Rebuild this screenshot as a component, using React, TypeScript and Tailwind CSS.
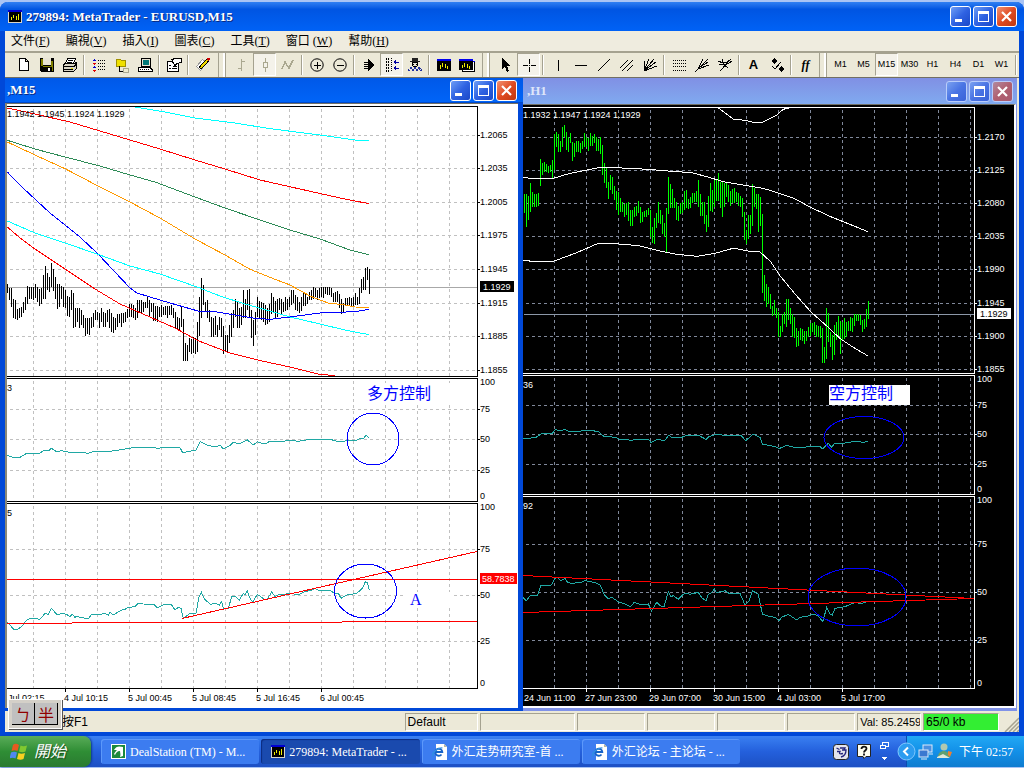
import React from "react";
import clsx from "clsx";

type Line = { color: string; points: string };
type Label = { text: string; y: number };

type ChartProps = {
  viewBox: string;
  title: string;
  ink: string;
  paper: string;
  gridColor: string;
  priceColor: string;
  barColor: string;
  left: number;
  right: number;
  panels: [number, number][];
  columns: number[];
  rows: number[];
  priceY: number;
  price: string;
  // bars, lines and oscillators are recorded in thirds of a pixel from this origin
  originX: number;
  originY: number;
  barX: number;
  bars: number[];
  lines: Line[];
  oscillatorY: number;
  oscillators: string[];
  quotes: string;
  quotesY: number;
  labels: Label[];
  corner: Label[];
  ticks: number[];
  times: [number, string][];
  children?: React.ReactNode;
};

const LEFT_BARS = [
  552, 580, 565, 600, 565, 620, 597, 655, 600, 657, 628, 660, 625, 655, 620, 650,
  605, 640, 592, 630, 558, 612, 562, 597, 562, 597, 562, 600, 552, 595, 560, 607,
  568, 617, 565, 612, 525, 597, 498, 597, 520, 570, 530, 575, 490, 560, 508, 572,
  530, 597, 552, 627, 552, 622, 557, 597, 560, 622, 570, 625, 588, 648, 590, 650,
  570, 630, 578, 685, 623, 680, 625, 665, 625, 685, 630, 675, 645, 685, 653, 708,
  655, 703, 655, 705, 650, 685, 640, 682, 630, 660, 637, 660, 640, 685, 625, 665,
  637, 680, 640, 680, 630, 665, 628, 683, 640, 695, 650, 698, 653, 690, 642, 682,
  642, 670, 640, 680, 640, 668, 635, 665, 627, 655, 613, 650, 612, 650, 615, 655,
  625, 660, 600, 655, 600, 640, 600, 640, 605, 635, 605, 625, 592, 625, 600, 650,
  610, 637, 610, 662, 617, 662, 618, 665, 620, 650, 615, 650, 620, 645, 618, 645,
  617, 655, 617, 645, 615, 645, 625, 655, 637, 685, 650, 690, 655, 690, 622, 680,
  658, 782, 730, 782, 735, 782, 715, 755, 717, 762, 710, 760, 715, 762, 665, 757,
  590, 707, 535, 655, 555, 615, 605, 635, 600, 655, 630, 665, 650, 710, 655, 710,
  648, 705, 675, 710, 650, 690, 655, 712, 677, 763, 705, 757, 705, 757, 675, 730,
  640, 710, 630, 685, 597, 650, 605, 685, 625, 685, 620, 675, 570, 655, 598, 655,
  570, 630, 568, 650, 630, 715, 660, 737, 635, 705, 592, 650, 603, 655, 605, 660,
  610, 665, 615, 675, 625, 672, 612, 665, 580, 642, 590, 640, 602, 655, 597, 650,
  595, 630, 598, 645, 605, 635, 590, 632, 598, 630, 592, 620, 570, 615, 570, 610,
  585, 630, 590, 632, 605, 640, 592, 632, 580, 617, 583, 617, 590, 612, 575, 600,
  570, 600, 562, 597, 563, 590, 570, 600, 565, 595, 562, 590, 560, 595, 562, 583,
  562, 585, 562, 585, 563, 592, 578, 605, 575, 605, 572, 605, 582, 625, 598, 642,
  610, 640, 595, 617, 595, 617, 592, 617, 595, 620, 592, 617, 580, 615, 592, 615,
  563, 613, 537, 580, 530, 570, 503, 570, 502, 540, 507, 582,
];

const RIGHT_BARS = [
  282, 338, 282, 380, 288, 360, 250, 335, 277, 322, 282, 322, 282, 322, 278, 317,
  177, 257, 190, 225, 187, 215, 193, 215, 198, 218, 196, 215, 180, 235, 102, 210,
  97, 140, 102, 157, 122, 155, 80, 142, 75, 112, 97, 150, 110, 157, 98, 130,
  125, 182, 130, 170, 123, 155, 123, 155, 130, 158, 122, 147, 98, 140, 110, 142,
  115, 152, 100, 138, 108, 138, 102, 130, 110, 152, 117, 152, 112, 162, 135, 225,
  188, 250, 205, 265, 245, 297, 225, 270, 232, 282, 258, 300, 272, 330, 275, 345,
  295, 337, 305, 337, 312, 350, 310, 345, 305, 362, 330, 377, 330, 377, 322, 350,
  318, 347, 302, 340, 320, 368, 335, 365, 333, 350, 330, 350, 325, 345, 330, 410,
  380, 430, 353, 432, 340, 385, 307, 370, 330, 372, 345, 402, 368, 412, 325, 455,
  232, 343, 252, 325, 268, 325, 293, 325, 305, 360, 317, 362, 308, 343, 305, 340,
  272, 330, 270, 325, 297, 327, 290, 325, 280, 310, 278, 307, 272, 307, 240, 320,
  282, 347, 305, 347, 307, 372, 345, 395, 288, 380, 248, 332, 270, 335, 238, 320,
  240, 302, 220, 302, 245, 325, 243, 350, 248, 320, 247, 290, 255, 305, 272, 317,
  267, 310, 265, 310, 277, 307, 280, 317, 288, 322, 293, 350, 335, 420, 390, 432,
  345, 418, 345, 402, 252, 377, 265, 320, 282, 327, 282, 397, 290, 377, 342, 580,
  525, 602, 553, 622, 560, 612, 583, 627, 617, 648, 600, 645, 623, 655, 637, 710,
  678, 712, 643, 695, 635, 672, 598, 680, 597, 660, 625, 672, 643, 710, 650, 715,
  683, 740, 692, 738, 683, 720, 687, 722, 693, 733, 692, 722, 680, 712, 670, 707,
  668, 697, 667, 705, 675, 710, 677, 710, 678, 715, 685, 788, 740, 788, 623, 778,
  640, 725, 695, 742, 705, 780, 675, 765, 665, 720, 648, 710, 663, 762, 665, 722,
  655, 717, 665, 712, 662, 692, 652, 692, 655, 695, 643, 677, 643, 663, 643, 662,
  645, 675, 660, 695, 657, 687, 627, 680, 603, 657,
];

const LEFT_LINES: Line[] = [
  { color: "#00ffff", points: "405,21 495,36 585,54 705,69 810,86 960,105 1065,120 1107,122" },
  { color: "#ff0000", points: "22,24 105,42 210,66 300,93 390,120 480,147 585,180 675,207 780,240 900,267 1020,294 1107,311" },
  { color: "#2e8b57", points: "22,121 105,147 195,171 300,198 390,225 465,246 585,291 675,324 780,360 870,390 960,417 1050,450 1107,464" },
  { color: "#ff9900", points: "22,126 105,165 195,206 300,261 390,306 480,354 585,417 675,465 750,508 810,532 870,555 930,588 984,609 1035,615 1065,621 1107,622" },
  { color: "#0000ff", points: "22,216 66,261 150,339 240,411 294,462 390,564 411,579 450,591 510,609 594,633 645,635 705,645 765,655 810,658 870,651 960,639 1065,635 1107,628" },
  { color: "#00ffff", points: "22,363 105,399 195,429 294,463 390,498 480,522 594,562 660,588 735,612 810,633 870,651 960,672 1035,690 1107,704" },
  { color: "#ff0000", points: "22,381 60,414 105,447 195,507 285,567 360,612 450,651 525,684 594,722 690,759 786,783 870,801 954,822 1005,827" },
];

const RIGHT_LINES: Line[] = [
  { color: "#ffffff", points: "610,24 655,57 690,61 715,67 742,67 787,45 797,33 812,25 822,24" },
  { color: "#ffffff", points: "24,232 45,235 115,235 165,220 250,203 300,203 400,208 470,214 530,218 575,230 625,245 690,256 745,265 792,280 837,295 887,322 947,350 997,370 1059,395" },
  { color: "#ffffff", points: "24,480 50,484 115,484 180,460 250,430 290,430 370,437 430,452 480,462 545,469 600,460 650,446 665,446 700,453 735,456 767,485 797,530 847,590 887,635 932,675 977,717 1012,740 1059,768" },
];

const LEFT_OSC = [
  "22,226 40,232 60,232 80,220 118,220 135,210 145,213 154,205 170,215 185,212 210,217 240,217 265,220 280,214 330,214 345,212 380,206 405,202 465,202 475,207 485,202 540,203 548,218 570,214 588,210 600,185 620,195 640,200 662,197 670,207 690,197 700,187 718,192 742,180 760,195 772,185 785,190 800,190 810,183 830,184 880,182 895,184 930,178 990,178 1020,186 1045,181 1065,182 1080,176 1092,174 1098,166 1107,174",
  "22,728 30,735 40,747 52,748 65,740 82,718 100,715 120,718 135,700 145,703 154,685 172,705 185,700 200,703 210,710 217,703 225,712 232,708 240,712 265,716 275,703 300,703 315,700 325,705 330,697 340,705 365,690 375,688 385,682 405,680 415,670 430,672 462,674 472,683 490,674 515,675 525,690 535,682 543,685 550,715 570,700 588,700 597,650 604,637 612,655 622,665 632,673 645,670 658,675 665,665 670,685 685,685 695,650 705,648 718,660 730,640 735,645 742,633 750,655 758,667 772,643 785,652 790,657 802,657 815,636 825,650 835,645 875,640 895,645 915,635 935,630 945,625 955,630 990,632 1005,640 1015,640 1023,655 1040,645 1070,640 1085,627 1090,620 1096,605 1102,608 1108,630",
];

const RIGHT_OSC = [
  "24,204 35,206 65,201 80,190 112,190 122,178 130,182 150,179 160,184 190,184 215,181 250,184 265,198 300,202 315,208 340,209 348,213 360,208 400,208 408,217 425,209 450,211 462,195 470,203 500,202 510,198 550,196 573,208 582,200 600,194 680,198 692,212 715,192 735,202 742,222 760,226 780,230 792,236 815,226 845,234 890,229 915,230 922,237 940,220 950,232 958,221 990,219 1020,214 1045,217 1058,214",
  "24,683 34,692 45,678 68,675 77,647 110,645 120,625 128,622 137,632 150,625 155,635 172,642 185,637 200,637 210,632 240,638 255,645 262,660 268,675 280,687 290,682 310,695 330,702 346,710 358,697 375,703 400,702 410,723 425,697 435,707 447,710 460,665 468,680 475,677 490,688 502,675 512,670 525,673 550,667 560,683 573,692 580,673 590,668 598,657 605,668 630,662 645,672 675,670 690,705 703,692 712,662 730,673 742,732 765,740 780,742 792,752 800,742 820,733 845,750 855,742 885,737 895,732 910,738 923,755 935,713 945,732 952,735 960,715 990,710 1018,698 1040,700 1052,697",
];

const chartText = "font-['Liberation_Sans',sans-serif] text-[9px]";

const Chart = (p: ChartProps) => {
  const bars: string[] = [];
  for (let i = 0; i < p.bars.length; i += 2) {
    bars.push(`M${p.barX + i * 3} ${p.bars[i]}V${p.bars[i + 1]}`);
  }
  const bottom = p.panels[p.panels.length - 1][1];
  return (
    <svg viewBox={p.viewBox} className="block h-auto w-full" role="img" aria-label={p.title}>
      <g shapeRendering="crispEdges" fill="none" transform="translate(.5 .5)">
        <g stroke={p.gridColor} strokeDasharray="3 3">
          {p.panels.map(([top, end]) =>
            p.columns.map((x) => <path key={`${top}-${x}`} d={`M${x} ${top + 2}V${end}`} />),
          )}
          {p.rows.map((y) => (
            <path key={y} d={`M${p.left + 2} ${y}H${p.right}`} />
          ))}
        </g>
        <path d={`M${p.left} ${p.priceY}H${p.right}`} stroke={p.priceColor} />
        <g stroke={p.ink}>
          {p.panels.map(([top, end]) => (
            <path key={top} d={`M${p.left - 1} ${top}H${p.right}V${end}H${p.left - 1}`} />
          ))}
          {p.rows.map((y) => (
            <path key={y} d={`M${p.right} ${y}h2`} />
          ))}
          {p.ticks.map((x) => (
            <path key={x} d={`M${x} ${bottom}v3`} />
          ))}
        </g>
      </g>
      <g
        shapeRendering="crispEdges"
        fill="none"
        strokeWidth="3"
        transform={`translate(${p.originX} ${p.originY}) scale(${1 / 3})`}
      >
        <path d={bars.join("")} stroke={p.barColor} />
        {p.lines.map((line) => (
          <polyline key={line.points} points={line.points} stroke={line.color} />
        ))}
      </g>
      <g
        shapeRendering="crispEdges"
        fill="none"
        stroke="#20a8a4"
        strokeWidth="3"
        transform={`translate(${p.originX} ${p.oscillatorY}) scale(${1 / 3})`}
      >
        {p.oscillators.map((points) => (
          <polyline key={points} points={points} />
        ))}
      </g>
      {p.children}
      <g className={chartText} fill={p.ink}>
        <text x={p.left} y={p.quotesY}>{p.quotes}</text>
        {p.labels.map((l) => (
          <text key={l.y} x={p.right + 3} y={l.y}>{l.text}</text>
        ))}
        {p.corner.map((l) => (
          <text key={l.y} x={p.left} y={l.y}>{l.text}</text>
        ))}
        {p.times.map(([x, text]) => (
          <text key={x} x={x} y={bottom + 13}>{text}</text>
        ))}
      </g>
      <rect x={p.right + 3} y={p.priceY - 6} width="34" height="11" fill={p.ink} />
      <text x={p.right + 6} y={p.priceY + 3} className={chartText} fill={p.paper}>{p.price}</text>
    </svg>
  );
};

const range = (start: number, count: number) => Array.from({ length: count }, (_, i) => start + i * 32);

const noteText = "font-['Liberation_Serif','Noto_Sans_CJK_TC',serif] text-[16px]";

const LeftChart = () => (
  <Chart
    title="EURUSD,M15"
    viewBox="7 104 511 604"
    ink="#000000"
    paper="#ffffff"
    gridColor="#c0c0c0"
    priceColor="#a8a8a8"
    barColor="#000000"
    left={7}
    right={477}
    panels={[[106, 376], [378, 501], [503, 688]]}
    columns={range(33, 14)}
    rows={[135, 168, 202, 235, 269, 303, 336, 370, 409, 439, 470, 549, 595, 641]}
    priceY={287}
    price="1.1929"
    originX={0}
    originY={100}
    barX={23}
    bars={LEFT_BARS}
    lines={LEFT_LINES}
    oscillatorY={380}
    oscillators={LEFT_OSC}
    quotes="1.1942 1.1945 1.1924 1.1929"
    quotesY={117}
    labels={[
      { text: "1.2065", y: 138 },
      { text: "1.2035", y: 171 },
      { text: "1.2005", y: 205 },
      { text: "1.1975", y: 238 },
      { text: "1.1945", y: 272 },
      { text: "1.1915", y: 306 },
      { text: "1.1885", y: 339 },
      { text: "1.1855", y: 373 },
      { text: "100", y: 385 },
      { text: "75", y: 412 },
      { text: "50", y: 442 },
      { text: "25", y: 473 },
      { text: "0", y: 499 },
      { text: "100", y: 510 },
      { text: "75", y: 552 },
      { text: "50", y: 598 },
      { text: "25", y: 644 },
      { text: "0", y: 686 },
    ]}
    corner={[{ text: "3", y: 391 }, { text: "5", y: 516 }]}
    ticks={[65, 129, 193, 257, 321]}
    times={[
      [8, "Jul 02:15"],
      [64, "4 Jul 10:15"],
      [128, "5 Jul 00:45"],
      [192, "5 Jul 08:45"],
      [256, "5 Jul 16:45"],
      [320, "6 Jul 00:45"],
    ]}
  >
    <g shapeRendering="crispEdges" fill="none" stroke="#ff0000">
      <path d="M7 579.5H477M182 618.5L477 551.5M7 623.5H72M72 622.5H342M342 621.5H477" />
    </g>
    <rect x="368" y="383" width="83" height="21" fill="#ffffff" />
    <rect x="404" y="592" width="48" height="16" fill="#ffffff" />
    <text x="367" y="399" className={noteText} fill="#0000ff">多方控制</text>
    <text x="410" y="605" className={noteText} fill="#0000ff">A</text>
    <g shapeRendering="crispEdges" fill="none" stroke="#0000ff">
      <circle cx="373" cy="439" r="26" />
      <ellipse cx="365.5" cy="591" rx="31" ry="27" />
    </g>
    <rect x="480" y="573" width="37" height="11" fill="#ff0000" />
    <text x="482" y="582" className={chartText} fill="#ffffff">58.7838</text>
  </Chart>
);

const RightChart = () => (
  <Chart
    title="EURUSD,H1"
    viewBox="523 105 491 601"
    ink="#ffffff"
    paper="#000000"
    gridColor="#80889a"
    priceColor="#8c98a8"
    barColor="#00ff00"
    left={523}
    right={974}
    panels={[[107, 373], [375, 494], [496, 688]]}
    columns={range(554, 14)}
    rows={[137, 170, 203, 236, 269, 303, 336, 369, 405, 434, 464, 544, 592, 640]}
    priceY={314}
    price="1.1929"
    originX={515}
    originY={100}
    barX={29}
    bars={RIGHT_BARS}
    lines={RIGHT_LINES}
    oscillatorY={370}
    oscillators={RIGHT_OSC}
    quotes="1.1932 1.1947 1.1924 1.1929"
    quotesY={118}
    labels={[
      { text: "1.2170", y: 140 },
      { text: "1.2125", y: 173 },
      { text: "1.2080", y: 206 },
      { text: "1.2035", y: 239 },
      { text: "1.1990", y: 272 },
      { text: "1.1945", y: 306 },
      { text: "1.1900", y: 339 },
      { text: "1.1855", y: 372 },
      { text: "100", y: 382 },
      { text: "75", y: 408 },
      { text: "50", y: 437 },
      { text: "25", y: 467 },
      { text: "0", y: 492 },
      { text: "100", y: 503 },
      { text: "75", y: 547 },
      { text: "50", y: 595 },
      { text: "25", y: 643 },
      { text: "0", y: 686 },
    ]}
    corner={[{ text: "36", y: 388 }, { text: "92", y: 509 }]}
    ticks={[586, 650, 714, 778, 842]}
    times={[
      [524, "24 Jun 11:00"],
      [585, "27 Jun 23:00"],
      [649, "29 Jun 07:00"],
      [713, "30 Jun 15:00"],
      [777, "4 Jul 03:00"],
      [841, "5 Jul 17:00"],
    ]}
  >
    <rect x="829" y="385" width="81" height="20" fill="#ffffff" />
    <text x="829" y="399" className={noteText} fill="#0000ff">空方控制</text>
    <path
      d="M523 575.500L974 598.500M523 612.500L974 598.500"
      shapeRendering="crispEdges"
      fill="none"
      stroke="#ff0000"
    />
    <g shapeRendering="crispEdges" fill="none" stroke="#0000ff">
      <ellipse cx="864" cy="437.5" rx="40" ry="21" />
      <ellipse cx="857" cy="597" rx="49" ry="29" />
    </g>
  </Chart>
);

const captionStyles = {
  blue: "bg-linear-to-br from-[#6f9df5] via-[#2f62e2] to-[#1a48c8]",
  red: "bg-linear-to-br from-[#f09070] via-[#e04a20] to-[#c03810]",
  fadedBlue: "bg-linear-to-br from-[#7aa0f0] via-[#4a74e4] to-[#3a62d8]",
  fadedRed: "bg-linear-to-br from-[#b08aa0] via-[#b06070] to-[#a85a70]",
};

const CaptionButtons = ({ name, faded = false }: { name: string; faded?: boolean }) => {
  const base = clsx(
    "flex size-[21px] items-center justify-center rounded-[3px] border",
    faded ? "border-[#b9cdfa]" : "border-white",
  );
  const blue = faded ? captionStyles.fadedBlue : captionStyles.blue;
  const red = faded ? captionStyles.fadedRed : captionStyles.red;
  return (
    <div className="flex shrink-0 gap-0.5">
      <button type="button" aria-label={`Minimize ${name}`} className={clsx(base, blue)}>
        <svg width="19" height="19" viewBox="0 0 19 19" shapeRendering="crispEdges">
          <path d="M4 12h7v3H4z" fill="#fff" />
        </svg>
      </button>
      <button type="button" aria-label={`Maximize ${name}`} className={clsx(base, blue)}>
        <svg width="19" height="19" viewBox="0 0 19 19" shapeRendering="crispEdges">
          <path d="M4 4h11v11H4zM5 7v7h9V7z" fill="#fff" fillRule="evenodd" />
        </svg>
      </button>
      <button type="button" aria-label={`Close ${name}`} className={clsx(base, red)}>
        <svg width="19" height="19" viewBox="0 0 19 19">
          <path d="M5 5l9 9M14 5l-9 9" stroke="#fff" strokeWidth="2.2" />
        </svg>
      </button>
    </div>
  );
};

const icons: Record<string, React.ReactNode> = {
  "New chart": <path d="M3.500 1.500h6l3 3v9h-9zM9.500 1.500v3h3" fill="#fff" stroke="#000" />,
  Save: (
    <>
      <path d="M1 1h14v14H2l-1-1z" fill="#000" />
      <path d="M2 2h2v7H2zM12 4h2v10h-1v-4H4V9h8z" fill="#808000" />
      <path d="M4 1h8v7H4z" fill="#e8e4d4" />
      <path d="M9 11h2v3H9z" fill="#fff" />
    </>
  ),
  Print: (
    <>
      <path d="M5.500 1.500h8l-2 5h-8z" fill="#fff" stroke="#000" />
      <path d="M6 3.500h5M5 5.500h5" stroke="#000" />
      <path d="M1.500 7.500l2-1h9l2-1v6l-3 3h-10z" fill="#d8d4c4" stroke="#000" />
      <path d="M1 9.500h11l3-3M2 12.500h9" stroke="#000" fill="none" />
      <path d="M9 11h2v1H9z" fill="#dd0" />
    </>
  ),
  "Market watch": (
    <>
      <path d="M1 4l2-2 2 2zM1 11l2-2 2 2z" fill="#0000d0" />
      <path d="M1 6h4L3 8zM1 13h4l-2 2z" fill="#e00000" />
      <path d="M7 3.500h8M7 6.500h8M7 9.500h8M7 12.500h8" stroke="#000" strokeDasharray="1 1" />
    </>
  ),
  Navigator: (
    <>
      <path d="M2 2h4l1 1h4v6H2z" fill="#f0e000" stroke="#a09000" />
      <path d="M5.500 9v5.500H9" stroke="#000" fill="none" />
      <path d="M9 11h5v4H9z" fill="#f0ecd0" stroke="#aaa890" />
    </>
  ),
  Terminal: (
    <>
      <path d="M4.500 1.500h9v8h-9z" fill="#e8e4d4" stroke="#000" />
      <path d="M6 3h6v5H6z" fill="#007878" />
      <path d="M2 10.500h11l2 2v2H1v-2z" fill="#fff" stroke="#000" />
      <path d="M3 12.500h9" stroke="#000" strokeDasharray="1 1" />
    </>
  ),
  Properties: (
    <>
      <path d="M1.500 4.500h11v10h-11z" fill="#fff" stroke="#000" />
      <path d="M6 2.500l3-1h6v4l-4 1-2 2-2-3z" fill="#fff" stroke="#000" />
      <path d="M3 8.500h2M3 11.500h2M6 11.500h5M7 9.500h4" stroke="#000" />
    </>
  ),
  "New order": (
    <>
      <path d="M1.500 9.500l6-7 4 3-6 8z" fill="#fff" stroke="#999" />
      <path d="M5 11.500l8-9" stroke="#000" strokeWidth="3.500" />
      <path d="M5.500 11l7.500-8.500" stroke="#f0d800" strokeWidth="1.800" />
      <path d="M12 1h2l1 1-1 2-2-1z" fill="#d00000" />
    </>
  ),
  "Bar chart": <path d="M7.500 2v12M8 4.500h3M4 11.500h3" stroke="#aaa890" strokeWidth="1.600" />,
  Candlesticks: <path d="M8.500 1v4M8.500 11v4M6.500 5.500h4v5h-4z" stroke="#aaa890" strokeWidth="1.600" fill="none" />,
  "Line chart": <path d="M2 12l3-7 4 6 4-8" stroke="#aaa890" strokeWidth="1.400" fill="none" />,
  "Zoom in": (
    <>
      <circle cx="8" cy="8" r="6.200" fill="none" stroke="#000" shapeRendering="auto" />
      <path d="M5 8.500h7M8.500 5v7" stroke="#000" />
    </>
  ),
  "Zoom out": (
    <>
      <circle cx="8" cy="8" r="6.200" fill="none" stroke="#000" shapeRendering="auto" />
      <path d="M5 8.500h7" stroke="#000" />
    </>
  ),
  "Auto scroll": (
    <>
      <path d="M7 2l6 6-6 6z" fill="#000" />
      <path d="M3 5.500h4M3 7.500h4M3 9.500h4M3 11.500h4" stroke="#000" />
    </>
  ),
  "Chart shift": (
    <>
      <path d="M2.500 1v14M4.500 1v14" stroke="#000" strokeDasharray="2 1" />
      <path d="M7.500 1v14" stroke="#000" strokeDasharray="1 1" />
      <path d="M9 5l3-3v6zM9 11l3-3v6zM12 4.500h3v1h-3zM12 10.500h3v1h-3z" fill="#0000a0" />
    </>
  ),
  "Expert advisors": (
    <>
      <path d="M5 1h6v3h2v1H3V4h2z" fill="#222" />
      <path d="M5.500 5.500h5v3l-2.500 2-2.500-2z" fill="#e8e4d4" stroke="#000" />
      <path d="M6 7h1v1H6zM9 7h1v1H9z" fill="#000" />
      <path d="M1 14l3-3 2 2 2-2 2 2 2-2 3 3" stroke="#2030a0" strokeWidth="1.500" fill="none" strokeDasharray="2 1" />
    </>
  ),
  "Chart window": (
    <>
      <path d="M1 2h14v12H1z" fill="#000" />
      <path d="M1 2h14v2H1z" fill="#0000f0" />
      <path d="M4.500 8v4M6.500 6v4M9.500 7v4M11.500 9v3" stroke="#f0f000" />
    </>
  ),
  "Chart profiles": (
    <>
      <path d="M3.500 4.500h12v10h-12z" fill="#fff" stroke="#000" />
      <path d="M0 2h14v11H0z" fill="#000" />
      <path d="M0 2h14v2H0zM14 4h2v1h-2z" fill="#0000f0" />
      <path d="M3.500 8v3M5.500 6v4M8.500 7v4M10.500 9v3" stroke="#f0f000" />
    </>
  ),
  Cursor: <path d="M4 1v11l3-2 2 5 2-1-2-5h4z" fill="#000" />,
  Crosshair: <path d="M8.500 2v5M8.500 10v5M2 8.500h5M10 8.500h5M8 8.500h1" stroke="#000" />,
  "Vertical line": <path d="M8.500 3v11" stroke="#000" />,
  "Horizontal line": <path d="M2 8.500h12" stroke="#000" />,
  "Trend line": <path d="M2 14L14 2" stroke="#000" />,
  Channel: <path d="M1 11L9 3M3 14L14 3M8 14l6-6" stroke="#000" />,
  Fan: <path d="M2 14L15 9M2 14L14 5M2 14L12 2M2 14L7 2M2 14L3 4" stroke="#000" />,
  Fibonacci: <path d="M2 3.500h13M2 6.500h13M2 9.500h13M2 13.500h13" stroke="#000" strokeDasharray="1 1" />,
  "Fibonacci fan": <path d="M1 15L14 2M4 12l11-4M4 12L9 2M6 10l8-5" stroke="#000" />,
  Pitchfork: <path d="M3 14L14 2M2 7c4 2 9 0 13-3M5 2c0 4 3 7 6 9M1 4c4 2 9 2 12-1" stroke="#000" fill="none" />,
  Arrows: (
    <>
      <path d="M5 1l3 3-3 3-3-3zM12 9l3 3-3 3-3-3z" fill="#000" />
      <path d="M3 9l3 3 6-7" stroke="#000" fill="none" />
    </>
  ),
};

type ButtonProps = { name: string; pressed?: boolean; children?: React.ReactNode };

const ToolButton = ({ name, pressed, children }: ButtonProps) => (
  <button
    type="button"
    aria-label={name}
    aria-pressed={pressed}
    className={clsx(
      "flex h-[23px] w-[23px] shrink-0 items-center justify-center",
      pressed && "border border-[#a5a290] border-r-white border-b-white bg-[#f4f2ea]",
    )}
  >
    {children ?? (
      <svg width="16" height="16" viewBox="0 0 16 16" shapeRendering="crispEdges">
        {icons[name]}
      </svg>
    )}
  </button>
);

const Separator = () => <div className="mx-0.5 my-0.5 w-0.5 shrink-0 border-l border-[#a5a290] bg-white" />;

const Grip = ({ className }: { className: string }) => (
  <div className={clsx("flex shrink-0 items-stretch justify-center gap-1", className)}>
    <div className="w-px bg-[#a5a290]" />
    <div className="w-[3px] border-r border-[#a5a290] bg-white" />
  </div>
);

const Tools = ({ names, pressed }: { names: string[]; pressed?: string }) => (
  <>
    {names.map((name) => (
      <ToolButton key={name} name={name} pressed={name === pressed} />
    ))}
  </>
);

const timeframes = ["M1", "M5", "M15", "M30", "H1", "H4", "D1", "W1"];

const Toolbar = () => (
  <div className="flex h-[25px] overflow-hidden border-t border-[#a5a290] pl-[7px]">
    <Tools names={["New chart", "Save", "Print"]} />
    <Separator />
    <Tools names={["Market watch", "Navigator", "Terminal"]} />
    <Separator />
    <Tools names={["Properties"]} />
    <Separator />
    <Tools names={["New order"]} />
    <Grip className="w-4" />
    <Tools names={["Bar chart", "Candlesticks", "Line chart"]} pressed="Candlesticks" />
    <Separator />
    <Tools names={["Zoom in", "Zoom out"]} />
    <Separator />
    <Tools names={["Auto scroll", "Chart shift", "Expert advisors"]} pressed="Chart shift" />
    <Separator />
    <Tools names={["Chart window", "Chart profiles"]} />
    <Grip className="w-4" />
    <Tools names={["Cursor", "Crosshair"]} pressed="Crosshair" />
    <Separator />
    <Tools names={["Vertical line", "Horizontal line", "Trend line", "Channel", "Fan"]} />
    <Separator />
    <Tools names={["Fibonacci", "Fibonacci fan", "Pitchfork"]} />
    <Separator />
    <ToolButton name="Text">
      <span className="text-[13px] font-bold">A</span>
    </ToolButton>
    <Tools names={["Arrows"]} />
    <Separator />
    <ToolButton name="Indicators">
      <span className="font-['Liberation_Serif',serif] text-[12px] font-bold italic">ff</span>
    </ToolButton>
    <Grip className="w-3" />
    {timeframes.map((frame) => (
      <ToolButton key={frame} name={frame} pressed={frame === "M15"}>
        <span className="text-[9px]">{frame}</span>
      </ToolButton>
    ))}
    <Separator />
  </div>
);

const menus: [string, string][] = [
  ["文件", "F"],
  ["顯視", "V"],
  ["插入", "I"],
  ["圖表", "C"],
  ["工具", "T"],
  ["窗口 ", "W"],
  ["幫助", "H"],
];

const ChartIcon = () => (
  <svg width="14" height="13" viewBox="0 0 14 13" shapeRendering="crispEdges" className="shrink-0">
    <path d="M0 0h14v13H0z" fill="#d8d4c8" />
    <path d="M1 2h12v10H1z" fill="#000" />
    <path d="M0 0h14v2H0z" fill="#0000d0" />
    <path d="M3.500 7v3M5.500 5v3M8.500 6v4M10.500 4v6" stroke="#f0f000" />
  </svg>
);

const StatusCell = ({ className, children }: { className: string; children?: React.ReactNode }) => (
  <div
    className={clsx(
      "h-[18px] min-w-0 overflow-hidden border border-[#a5a290] border-r-white border-b-white leading-4 whitespace-nowrap",
      className,
    )}
  >
    <span className="ml-0.5">{children}</span>
  </div>
);

const StatusBar = () => (
  <div className="relative flex h-[21px] items-center gap-0.5 pr-5 text-[12px]">
    <div className="min-w-0 flex-[398] font-['Liberation_Sans','Noto_Sans_CJK_TC',sans-serif]">
      <p className="ml-[57px]">按F1</p>
    </div>
    <StatusCell className="flex-[71]">Default</StatusCell>
    <StatusCell className="flex-[94]" />
    <StatusCell className="flex-[66]" />
    <StatusCell className="flex-[66]" />
    <StatusCell className="flex-[66]" />
    <StatusCell className="flex-[66]" />
    <StatusCell className="flex-[62] text-[11px]">Val: 85.2459</StatusCell>
    <StatusCell className="flex-[74] bg-[#33ee33]">65/0 kb</StatusCell>
    <svg width="15" height="15" viewBox="0 0 15 15" className="absolute right-0 bottom-0">
      <path d="M1 15L15 1M5 15L15 5M9 15l6-6M13 15l2-2" stroke="#a5a290" strokeWidth="1.500" />
    </svg>
    <div className="absolute -top-3 left-[3px] flex border border-white bg-[#d4d0c8] p-[3px] font-['Noto_Sans_CJK_TC',sans-serif] text-[16px] text-[#900000] shadow-[1px_1px_0_#555]">
      <button type="button" className="h-[22px] w-[23px] border-r border-b border-black bg-[#c0c0c0] leading-5">ㄅ</button>
      <button type="button" className="h-[22px] w-[23px] border-r border-b border-black bg-[#c0c0c0] leading-5">半</button>
    </div>
  </div>
);

const BrowserIcon = () => (
  <svg width="16" height="16" viewBox="0 0 16 16" className="shrink-0">
    <path d="M4 0h8l3 3v13H4z" fill="#fff" />
    <path d="M12 0l3 3h-3z" fill="#b8b8a0" />
    <path d="M9.500 10.500a3.500 3.500 0 1 1 .8-2.500H4" fill="none" stroke="#1763c8" strokeWidth="1.900" />
    <path d="M1 12.500C-.5 9 6 3 10.500 4" fill="none" stroke="#2f8fe0" strokeWidth="1.200" />
  </svg>
);

const DealIcon = () => (
  <svg width="15" height="15" viewBox="0 0 15 15" className="shrink-0">
    <path d="M0 0h15v15H0z" fill="#fff" />
    <path d="M1 1h13v13H1z" fill="#1c8a3c" />
    <path d="M3 6c2-4 5-4 9-3v9l-3 1c1-3 0-4 0-6-3 0-4 2-5 4l-1-1c1-2 2-3 3-4z" fill="#fff" />
  </svg>
);

const tasks = [
  { text: "DealStation (TM) - M...", icon: <DealIcon />, active: false },
  { text: "279894: MetaTrader - ...", icon: <ChartIcon />, active: true },
  { text: "外汇走势研究室-首 ...", icon: <BrowserIcon />, active: false },
  { text: "外汇论坛 - 主论坛 - ...", icon: <BrowserIcon />, active: false },
];

const Taskbar = () => (
  <footer className="flex h-[31px] items-stretch bg-linear-to-b from-[#3a80f2] via-[#2460dc] to-[#1d50c4] font-['Liberation_Serif','Noto_Sans_CJK_TC',serif] text-white">
    <button
      type="button"
      className="flex w-[91px] shrink-0 items-center gap-1 rounded-r-lg bg-linear-to-b from-[#58ac58] via-[#2f8e35] to-[#2a7a30] pl-2.5 shadow-[1px_0_2px_#103a90]"
    >
      <svg width="20" height="19" viewBox="0 0 20 19">
        <path d="M3 3c2-2 4-1 6 0L7.500 9C5.500 8 3.500 8 1.500 9z" fill="#e85a20" />
        <path d="M10.500 3.500c2 1 4 1 6.500 0l-1.500 6c-2 1-4 1-6.500 0z" fill="#80c830" />
        <path d="M1 10.500c2-1 4-1 6 0l-1.500 6c-2-1-4-1-6 0z" fill="#5088f0" />
        <path d="M8.500 11c2 1 4 1 6.500 0l-1.500 6c-2 1-4 1-6.500 0z" fill="#f8d020" />
      </svg>
      <span className="text-[16px] italic [text-shadow:1px_1px_1px_#1a4a1a]">開始</span>
    </button>
    <nav className="flex min-w-0 flex-[639] items-center gap-0.5 py-0.5 pl-2.5 text-[12px]">
      {tasks.map((task) => (
        <button
          key={task.text}
          type="button"
          className={clsx(
            "flex h-[25px] min-w-0 flex-1 items-center gap-1 overflow-hidden rounded-[3px] pl-2.5 whitespace-nowrap",
            task.active
              ? "bg-[#1a4aae] shadow-[inset_1px_1px_1px_#0c2c80]"
              : "bg-[#3c7cf0] shadow-[inset_1px_1px_0_#5c98fa]",
          )}
        >
          {task.icon}
          <span>{task.text}</span>
        </button>
      ))}
    </nav>
    <div className="flex flex-[150] items-center justify-end gap-2 pr-4">
      <svg width="16" height="16" viewBox="0 0 16 16">
        <rect x=".5" y=".5" width="15" height="15" rx="3" fill="#e4e4ec" stroke="#222" />
        <path d="M3.500 4l3 1.500M4 7.500h3c-1 2-1 3 3 2M7 4h5c-1 2-1 2-3 2h4c0 4-1 6-5 7" fill="none" stroke="#24247c" strokeWidth="1.300" />
      </svg>
      <svg width="14" height="15" viewBox="0 0 14 15">
        <path d="M.5.5h13v12H9L7 14.500l-1-2H.5z" fill="#fffff0" stroke="#222" />
        <path d="M4.500 5c0-3 5-3 5-.5C9.500 6.500 7 6.500 7 8.500M7 9.500v2" fill="none" stroke="#111" strokeWidth="1.800" />
      </svg>
      <svg width="11" height="22" viewBox="0 0 11 22" shapeRendering="crispEdges" fill="none">
        <path d="M3.500 4V1.500h6v4H7M1.500 4.500h5v3h-5z" stroke="#fff" />
        <path d="M2 16h6l-3 3z" fill="#fff" />
      </svg>
    </div>
    <div className="flex flex-[117] items-center gap-0.5 border-l border-[#0c4cb0] bg-linear-to-b from-[#22a8f4] via-[#1290e8] to-[#0f7cd0] text-[12px] whitespace-nowrap">
      <button type="button" aria-label="Show hidden icons" className="-ml-2.5">
        <svg width="19" height="19" viewBox="0 0 19 19">
          <circle cx="9.500" cy="9.500" r="8.500" fill="#2c9cf0" stroke="#80c8ff" />
          <path d="M11 5.500l-4 4 4 4" fill="none" stroke="#fff" strokeWidth="2" />
        </svg>
      </button>
      <svg width="16" height="16" viewBox="0 0 16 16">
        <rect x="5" y="1" width="9" height="7" fill="#4a90e0" stroke="#dce8f8" />
        <rect x="1" y="6" width="9" height="7" fill="#3a78d0" stroke="#dce8f8" />
        <path d="M3 15h6M11 10h4" stroke="#dce8f8" />
      </svg>
      <svg width="17" height="17" viewBox="0 0 17 17">
        <circle cx="8" cy="4" r="3.500" fill="#b0c8b0" />
        <path d="M2 14c0-8 11-8 12 0z" fill="#60a070" />
        <path d="M1 14l6-3 7 4H1z" fill="#e0e8d8" />
        <path d="M12 8l4 1-2 5-2-2z" fill="#f08030" />
      </svg>
      <time className="pl-1">下午 02:57</time>
    </div>
  </footer>
);

export default function App() {
  return (
    <div className="min-h-screen bg-[#a9c4f4] pt-0.5 font-['Liberation_Sans',sans-serif] text-black">
      <main className="rounded-t-lg border-x-[5px] border-b-4 border-[#0048d8] bg-[#ece9d8]">
        <header className="-mx-[5px] flex h-[29px] items-center gap-1 rounded-t-lg bg-linear-to-b from-[#2f7ff2] via-[#0055e2] via-25% to-[#0062f6] pr-[7px] pl-2">
          <ChartIcon />
          <h1 className="min-w-0 flex-1 truncate font-['Liberation_Serif',serif] text-[13px] font-bold text-white [text-shadow:1px_1px_0_#0a2a80]">
            279894: MetaTrader - EURUSD,M15
          </h1>
          <CaptionButtons name="MetaTrader" />
        </header>
        <nav className="flex h-[21px] border-b border-[#a5a290] bg-[#efecdf] pl-1.5 font-['Liberation_Serif','Noto_Sans_CJK_TC',serif] text-[12px] leading-[18px]">
          {menus.map(([label, key]) => (
            <button key={key} type="button" className="pr-4 whitespace-pre">
              {label}(<u>{key}</u>)
            </button>
          ))}
        </nav>
        <Toolbar />
        <div className="flex items-start border-t border-[#716f64] pr-0.5">
          <section className="min-w-0 flex-[518] bg-[#0048d8]">
            <div className="flex h-[25px] items-center border-b border-[#0048c8] bg-linear-to-b from-[#0058e8] to-[#0064f8] pr-1.5 pl-0.5">
              <h2 className="flex-1 font-['Liberation_Serif',serif] text-[13px] font-bold text-white [text-shadow:1px_1px_0_#0a2a80]">
                ,M15
              </h2>
              <CaptionButtons name="M15 chart" />
            </div>
            <div className="mr-[5px] border-t border-l-2 border-t-[#716f64] border-l-[#8a8878] bg-white">
              <LeftChart />
            </div>
            <div className="h-[3px]" />
          </section>
          <section className="min-w-0 flex-[494] bg-[#8092e8]">
            <div className="flex h-[26px] items-center bg-linear-to-b from-[#8090e4] to-[#80aaf0] pr-1 pl-1">
              <h2 className="flex-1 font-['Liberation_Serif',serif] text-[13px] font-bold text-[#dfe6fa]">,H1</h2>
              <CaptionButtons name="H1 chart" faded />
            </div>
            <div className="mr-px border-t border-r-2 border-b-2 border-t-[#716f64] border-r-white border-b-white bg-black">
              <RightChart />
            </div>
            <div className="h-[3px]" />
          </section>
        </div>
        <StatusBar />
      </main>
      <Taskbar />
    </div>
  );
}
